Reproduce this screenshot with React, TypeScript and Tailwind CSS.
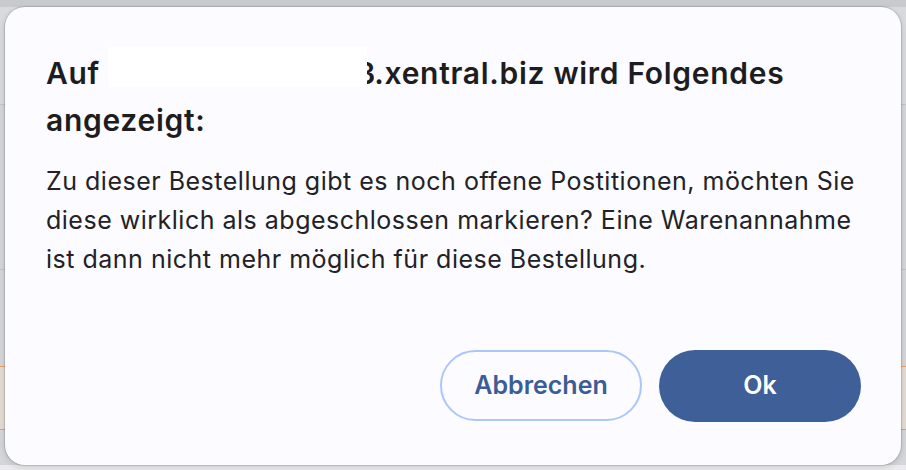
import React from "react";

export default function App() {
  return (
    <div className="relative w-[906px] h-[470px] overflow-hidden bg-[#d6d7db]" style={{ fontFamily: "Inter, 'Noto Sans', sans-serif" }}>
      {/* backdrop page */}
      <div className="flex flex-col w-full h-full">
        <div className="h-[7px] bg-[#c9cace]" />
        <div className="h-[98px] bg-[#d9dadd] border-b border-[#c4c5c9]" />
        <div className="h-[165px] bg-[#d5d6da] border-b border-[#c4c5c9]" />
        <div className="h-[96px] bg-[#d5d6da]" />
        <div className="h-[64px] bg-[#e3dcd3] border-y border-[#e9a35f]" />
        <div className="h-[35px] bg-[#d5d6da]" />
        <div className="flex-1 bg-[#ebebed]" />
      </div>

      {/* dialog */}
      <div className="absolute left-[5px] top-[7px] w-[896px] h-[458px] rounded-[20px] bg-[#fcfbff] shadow-[0_0_0_1px_rgba(0,0,0,0.12),0_2px_6px_rgba(0,0,0,0.15)] flex flex-col pl-[41px] pr-[40px] pt-[40px] pb-[43px]">
        <h1 className="text-[30px] font-semibold leading-[47px] text-[#1d1d21] tracking-[0.7px]">
          Auf{" "}
          <span className="inline-block align-[-3px] w-[259px] h-[40px] bg-white" />
          <span className="inline-block w-[7px] overflow-hidden align-bottom">
            <span className="inline-block -ml-[11px]">3</span>
          </span>
          .xentral.biz wird Folgendes angezeigt:
        </h1>
        <p className="mt-[18px] text-[25px] leading-[39px] text-[#222226] tracking-[0.5px]">
          Zu dieser Bestellung gibt es noch offene Postitionen, möchten Sie diese wirklich als abgeschlossen markieren? Eine Warenannahme ist dann nicht mehr möglich für diese Bestellung.
        </p>
        <div className="mt-auto flex justify-end gap-[17px]">
          <button className="w-[202px] h-[71px] rounded-full border-[2px] border-[#abc7fa] bg-transparent text-[#3b5d96] text-[25px] font-semibold">
            Abbrechen
          </button>
          <button className="w-[202px] h-[72px] rounded-full bg-[#3e5f97] text-white text-[25px] font-semibold">
            Ok
          </button>
        </div>
      </div>
    </div>
  );
}
